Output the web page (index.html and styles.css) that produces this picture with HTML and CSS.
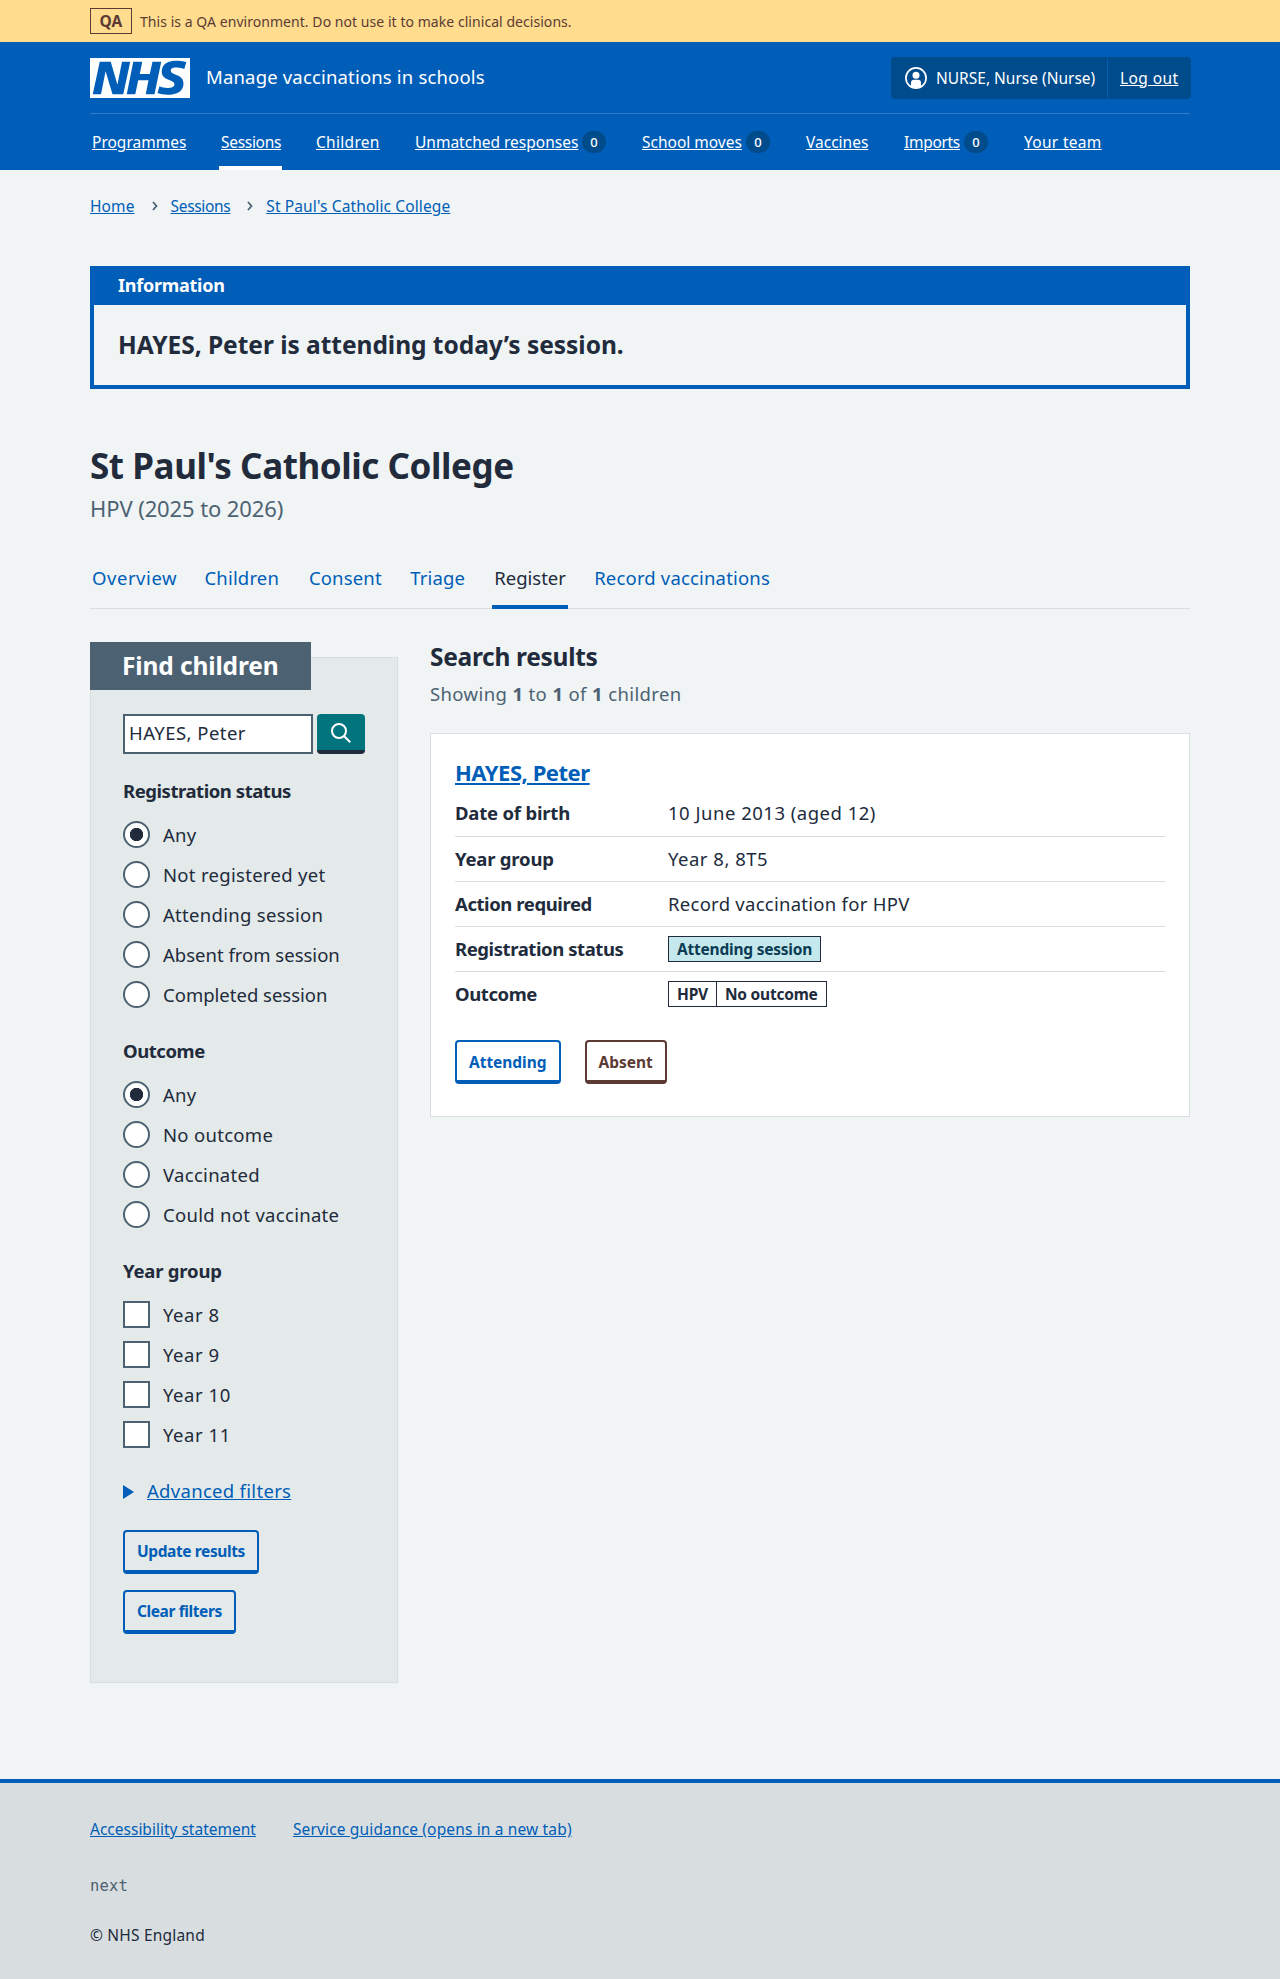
FILE: index.html
```html
<!DOCTYPE html>
<html lang="en">
<head>
<meta charset="utf-8">
<title>St Paul's Catholic College - Manage vaccinations in schools</title>
<link rel="stylesheet" href="styles.css">
</head>
<body>
<div class="env"><div class="container env-inner"><strong class="env-tag">QA</strong><span class="env-text">This is a QA environment. Do not use it to make clinical decisions.</span></div></div>

<header class="header">
  <div class="container">
    <div class="header-top">
      <a class="brand" href="#">
        <svg class="logo" viewBox="0 0 40 16" role="img" aria-label="NHS"><path fill="#fff" d="M0 0h40v16H0z"/><path fill="#005eb8" d="M3.900 1.500h4.400l2.600 9h.1l1.800-9h3.300l-2.800 13H9l-2.700-9h-.1l-1.800 9H1.100M17.300 1.500h3.600l-1 4.900h4L25 1.500h3.500l-2.700 13h-3.500l1.100-5.600h-4.100l-1.200 5.600h-3.400M37.700 4.400c-.7-.3-1.600-.6-2.900-.6-1.400 0-2.500.2-2.500 1.300 0 1.800 5.100 1.200 5.100 5.100 0 3.600-3.300 4.500-6.400 4.500-1.300 0-2.900-.3-4-.7l.8-2.700c.7.4 2.100.7 3.200.7s2.800-.2 2.800-1.500c0-2.100-5.100-1.300-5.100-5 0-3.400 2.900-4.400 5.800-4.400 1.600 0 3.100.2 4 .6"/></svg>
        <span class="service">Manage vaccinations in schools</span>
      </a>
      <div class="account">
        <div class="account-user">
          <svg class="user-icon" viewBox="0 0 22 22"><circle cx="11" cy="11" r="10.100" fill="none" stroke="#fff" stroke-width="1.700"/><circle cx="11" cy="8.200" r="3.500" fill="#fff"/><path fill="#fff" d="M6 19.500V15.700a3 3 0 0 1 3-3h4a3 3 0 0 1 3 3v3.800A10 10 0 0 1 11 21a10 10 0 0 1-5-1.500z"/></svg>
          <span>NURSE, Nurse (Nurse)</span>
        </div>
        <a class="account-out" href="#">Log out</a>
      </div>
    </div>
    <nav class="nav">
      <a href="#"><span>Programmes</span></a>
      <a href="#" class="current"><span class="tight">Sessions</span></a>
      <a href="#"><span class="loose">Children</span></a>
      <a href="#"><span>Unmatched responses</span><b class="badge">0</b></a>
      <a href="#"><span>School moves</span><b class="badge">0</b></a>
      <a href="#"><span>Vaccines</span></a>
      <a href="#"><span class="tight">Imports</span><b class="badge">0</b></a>
      <a href="#"><span class="loose">Your team</span></a>
    </nav>
  </div>
</header>

<main class="container main">
  <nav class="crumbs">
    <a href="#">Home</a>
    <svg viewBox="0 0 6 10"><path d="M1 1l3.500 4L1 9"/></svg>
    <a href="#" class="tight">Sessions</a>
    <svg viewBox="0 0 6 10"><path d="M1 1l3.500 4L1 9"/></svg>
    <a href="#">St Paul's Catholic College</a>
  </nav>

  <section class="banner">
    <h2 class="banner-title">Information</h2>
    <p class="banner-text">HAYES, Peter is attending today’s session.</p>
  </section>

  <h1 class="title">St Paul's Catholic College</h1>
  <p class="caption">HPV (2025 to 2026)</p>

  <nav class="tabs">
    <a href="#" class="wide">Overview</a>
    <a href="#">Children</a>
    <a href="#">Consent</a>
    <a href="#">Triage</a>
    <a href="#" class="current">Register</a>
    <a href="#">Record vaccinations</a>
  </nav>

  <div class="columns">
    <form class="filters">
      <h2 class="filters-title">Find children</h2>
      <div class="search">
        <input class="search-input" type="text" value="HAYES, Peter" aria-label="Search">
        <button class="search-button" type="button" aria-label="Search"><svg viewBox="0 0 20 20"><circle cx="8" cy="8" r="7"/><path d="m13.200 13.200 6 6"/></svg></button>
      </div>
      <fieldset class="group">
        <legend>Registration status</legend>
        <label class="choice"><i class="radio on"></i><span>Any</span></label>
        <label class="choice"><i class="radio"></i><span>Not registered yet</span></label>
        <label class="choice"><i class="radio"></i><span>Attending session</span></label>
        <label class="choice"><i class="radio"></i><span class="snug">Absent from session</span></label>
        <label class="choice"><i class="radio"></i><span class="snug">Completed session</span></label>
      </fieldset>
      <fieldset class="group">
        <legend>Outcome</legend>
        <label class="choice"><i class="radio on"></i><span>Any</span></label>
        <label class="choice"><i class="radio"></i><span>No outcome</span></label>
        <label class="choice"><i class="radio"></i><span>Vaccinated</span></label>
        <label class="choice"><i class="radio"></i><span>Could not vaccinate</span></label>
      </fieldset>
      <fieldset class="group">
        <legend class="roomy">Year group</legend>
        <label class="choice"><i class="check"></i><span class="wide">Year 8</span></label>
        <label class="choice"><i class="check"></i><span class="wide">Year 9</span></label>
        <label class="choice"><i class="check"></i><span class="wide">Year 10</span></label>
        <label class="choice"><i class="check"></i><span class="wide">Year 11</span></label>
      </fieldset>
      <div class="advanced"><i class="arrow"></i><span>Advanced filters</span></div>
      <div class="filter-buttons">
        <button type="button" class="button">Update results</button>
        <button type="button" class="button">Clear filters</button>
      </div>
    </form>

    <section class="results">
      <h2 class="results-title">Search results</h2>
      <p class="results-count">Showing <b>1</b> to <b>1</b> of <b>1</b> children</p>
      <article class="card">
        <h3 class="card-title"><a href="#">HAYES, Peter</a></h3>
        <dl class="summary">
          <div><dt class="roomy">Date of birth</dt><dd class="wide">10 June 2013 (aged 12)</dd></div>
          <div><dt class="roomy">Year group</dt><dd class="wide">Year 8, 8T5</dd></div>
          <div><dt>Action required</dt><dd>Record vaccination for HPV</dd></div>
          <div><dt>Registration status</dt><dd><strong class="tag tag-aqua">Attending session</strong></dd></div>
          <div><dt>Outcome</dt><dd><strong class="tag">HPV</strong><strong class="tag tag-joined">No outcome</strong></dd></div>
        </dl>
        <div class="card-buttons">
          <button type="button" class="button">Attending</button>
          <button type="button" class="button button-brown">Absent</button>
        </div>
      </article>
    </section>
  </div>
</main>

<footer class="footer">
  <div class="container">
    <div class="footer-links"><a href="#" class="plain">Accessibility statement</a><a href="#">Service guidance (opens in a new tab)</a></div>
    <p class="release">next</p>
    <p class="copyright">© NHS England</p>
  </div>
</footer>
</body>
</html>
```
FILE: styles.css
```css
* { box-sizing: border-box; }
body { margin: 0; background: #f0f4f5; color: #212b3c; font-family: "Noto Sans", "Open Sans", sans-serif; font-size: 18.5px; line-height: 28px; }
h1, h2, h3, p, dl, dd, fieldset { margin: 0; padding: 0; border: 0; }
a { color: #005eb8; }
.container { width: 1100px; margin: 0 auto; }

.env { background: #ffdc8e; color: #5b3b33; }
.env-inner { display: flex; align-items: center; gap: 8px; height: 42px; font-size: 14px; letter-spacing: 0.05px; }
.env-tag { width: 42px; height: 26px; border: 1px solid; text-align: center; line-height: 24px; font-size: 15.5px; font-weight: 700; }
.env-text { padding-top: 1px; }

.header { background: #005eb8; color: #fff; height: 128px; font-size: 15.5px; }
.header a { color: #fff; }
.header-top { display: flex; justify-content: space-between; align-items: center; height: 72px; border-bottom: 1px solid #337ec6; }
.brand { display: flex; align-items: center; gap: 16px; text-decoration: none; }
.logo { width: 100px; height: 40px; }
.service { padding-bottom: 2px; font-size: 18.5px; letter-spacing: 0.17px; }
.account { display: flex; width: 300px; height: 42px; margin-right: -1px; background: #004b8c; border-radius: 4px; line-height: 42px; }
.account-user { display: flex; flex: none; align-items: center; gap: 9px; width: 217px; margin: 1px 0; padding-left: 14px; border-right: 1px solid #005eb8; }
.user-icon { width: 22px; height: 22px; }
.account-out { padding-left: 12px; letter-spacing: 0.4px; }
.tight { letter-spacing: -0.3px; }
.loose { letter-spacing: 0.3px; }
.snug { letter-spacing: 0; }
.nav { display: grid; grid-template-columns: 97px 63px 67px 195px 132px 66px 88px auto; justify-content: start; gap: 32px; }
.nav a { display: flex; align-items: center; justify-content: space-between; height: 56px; padding: 4px 2px 0; border-bottom: 4px solid transparent; text-decoration: none; }
.nav a span { text-decoration: underline; white-space: nowrap; }
.nav a.current { border-bottom-color: #fff; }
.badge { width: 24px; height: 22px; border-radius: 12px; background: #004b8c; font-size: 13px; font-weight: 500; line-height: 22px; text-align: center; }

.main { height: 1609px; }
.crumbs { display: flex; align-items: center; height: 96px; padding: 24px 0 48px; font-size: 15.5px; letter-spacing: 0.12px; }
.crumbs .tight { letter-spacing: -0.35px; }
.crumbs svg { width: 6px; height: 10px; margin: 0 13px 0 17px; fill: none; stroke: #4c6272; stroke-width: 1.8; }

.banner { border: 4px solid #005eb8; height: 123px; padding: 0 24px; }
.banner-title { margin: 0 -24px; padding: 0 24px; height: 35px; background: #005eb8; color: #fff; font-size: 18px; font-weight: 700; line-height: 30px; letter-spacing: -0.25px; }
.banner-text { font-size: 24.5px; font-weight: 700; line-height: 80px; letter-spacing: -0.03px; }

.title { margin-top: 53px; font-size: 35px; font-weight: 700; line-height: 48px; letter-spacing: -0.43px; }
.caption { margin-top: 2px; color: #4c6272; font-size: 22px; line-height: 32px; letter-spacing: -0.1px; }
.tabs { display: grid; grid-template-columns: 88.5px 80.4px 77.3px 60px 76px auto; justify-content: start; gap: 24px; height: 60px; margin-top: 25px; border-bottom: 1px solid #d8dde0; letter-spacing: 0.17px; }
.tabs a { height: 60px; padding: 15px 2px 0; text-decoration: none; border-bottom: 4px solid transparent; white-space: nowrap; }
.tabs a.current { color: #212b3c; border-bottom-color: #005eb8; letter-spacing: 0; }
.wide, .tabs a.wide { letter-spacing: 0.55px; }

.columns { display: grid; grid-template-columns: 308px 760px; gap: 32px; margin-top: 33px; align-items: start; }
.filters { margin-top: 15px; height: 1026px; padding: 0 32px; border: 1px solid #d8dde0; background: #e4e9e9; }
.filters-title { width: 221px; height: 48px; margin: -16px 0 24px -33px; padding-left: 32px; background: #4c6272; color: #fff; font-size: 24.5px; font-weight: 700; line-height: 48px; letter-spacing: -0.13px; }
.search { display: flex; gap: 4px; }
.search-input { width: 190px; height: 40px; border: 2px solid #4c6272; padding: 1px 4px 4px; background: #fff; color: #212b3c; font: inherit; letter-spacing: 0.45px; }
.search-button { width: 48px; height: 40px; padding: 0; border: 0; border-bottom: 4px solid #212b3c; border-radius: 4px; background: #00747d; }
.search-button svg { display: block; width: 20px; height: 20px; margin: 1px auto 0; fill: none; stroke: #fff; stroke-width: 2; }
.group { display: flex; flex-direction: column; margin-top: 23px; }
.group legend { padding: 0; margin-bottom: 9px; font-weight: 700; letter-spacing: -0.45px; }
.choice { display: flex; align-items: center; gap: 13px; height: 40px; letter-spacing: 0.3px; }
.choice span { padding-top: 2px; }
.radio, .check { width: 27px; height: 27px; border: 2px solid #4c6272; background: #fff; }
.radio { border-radius: 50%; }
.radio.on { background: radial-gradient(circle, #212b3c 6.3px, #fff 7px); }
.advanced { display: flex; align-items: center; gap: 13px; margin-top: 23px; color: #005eb8; text-decoration: underline; letter-spacing: 0.3px; }
.advanced span { padding-bottom: 1px; }
.arrow { border-left: 11px solid; border-top: 7px solid transparent; border-bottom: 7px solid transparent; }
.filter-buttons { display: flex; flex-direction: column; align-items: flex-start; gap: 16px; margin-top: 24px; }
.button { height: 44px; padding: 0 12px; border: 2px solid #005eb8; border-bottom-width: 4px; border-radius: 4px; background: transparent; color: #005eb8; font-family: inherit; font-size: 15.5px; font-weight: 700; letter-spacing: -0.4px; }
.card-buttons .button { letter-spacing: -0.03px; padding-top: 1px; }
.card-buttons .button-brown { border-color: #5b3b33; color: #5b3b33; }

.results-title { font-size: 24.5px; font-weight: 700; line-height: 30px; letter-spacing: -0.3px; }
.results-count { margin-top: 8px; color: #4c6272; letter-spacing: 0.38px; }
.results-count b { font-weight: 700; }
.card { height: 384px; margin-top: 25px; padding: 24px; border: 1px solid #d8dde0; background: #fff; }
.card-title { font-size: 22px; font-weight: 700; line-height: 28px; letter-spacing: -0.47px; }
.summary { margin-top: 5px; }
.summary div { display: grid; grid-template-columns: 213px 1fr; height: 45px; align-items: center; padding-bottom: 1px; border-bottom: 1px solid #d8dde0; }
.summary div:first-child { height: 46px; padding-bottom: 2px; }
.summary div:last-child { border: 0; }
.summary dt { font-weight: 700; letter-spacing: -0.42px; }
.group .roomy, .summary .roomy { letter-spacing: -0.2px; }
.summary dd { display: flex; letter-spacing: 0.27px; }
.summary dd.wide { letter-spacing: 0.5px; }
.tag { height: 26px; padding: 0 8px; border: 1px solid #212b3c; font-size: 15.5px; font-weight: 700; line-height: 24px; letter-spacing: -0.22px; }
.tag-joined { margin-left: -1px; }
.tag-aqua { background: #c5e8ec; color: #0b3c53; }
.card-buttons { display: flex; gap: 24px; margin-top: 23px; }

.footer { height: 200px; border-top: 4px solid #005eb8; background: #d8dde0; font-size: 15.5px; letter-spacing: 0.15px; }
.footer-links { display: flex; gap: 37px; padding-top: 32px; }
.plain { letter-spacing: 0; }
.release { margin-top: 29px; color: #4c6272; font-family: "DejaVu Sans Mono", monospace; font-size: 15.5px; letter-spacing: 0.2px; }
.copyright { margin-top: 21px; letter-spacing: 0.2px; }
```
